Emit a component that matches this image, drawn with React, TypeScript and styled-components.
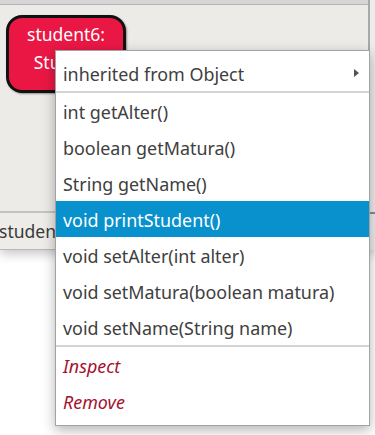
import React from 'react';
import styled, { createGlobalStyle } from 'styled-components';

const GlobalStyle = createGlobalStyle`
	body {
		margin: 0;
		background: #ffffff;
		font-family: 'Noto Sans', 'Open Sans', sans-serif;
	}
`;

const Page = styled.div`
	position: relative;
	width: 375px;
	height: 435px;
	overflow: hidden;
`;

const Frame = styled.div`
	display: flex;
	width: 375px;
	box-shadow: 0 4px 10px rgba(0, 0, 0, 0.22);
`;

const Main = styled.div`
	width: 368px;
	border-right: 2px solid #a8a8a8;
	display: flex;
	flex-direction: column;
`;

const SideStrip = styled.div`
	flex: 1;
	background: #ececec;
	display: flex;
	flex-direction: column;
	justify-content: flex-end;
	padding-bottom: 36px;
	.tick {
		height: 2px;
		background: #8a8a8a;
	}
`;

const TopBand = styled.div`
	height: 4px;
	background: #d6d6d6;
	border-bottom: 1px solid #b3b3b3;
`;

const Bench = styled.div`
	height: 208px;
	background: #ecebe7;
	padding: 10px 0 0 6px;
	box-sizing: border-box;
	border-bottom: 2px solid #c4c3c0;
`;

const ObjectNode = styled.div`
	width: 120px;
	height: 78px;
	box-sizing: border-box;
	background: #ea1744;
	border: 3px solid #111111;
	border-radius: 16px;
	box-shadow: 1px 1px 2px rgba(0, 0, 0, 0.4);
	color: #ffffff;
	font-size: 17.5px;
	line-height: 28px;
	text-align: center;
	padding-top: 2px;
`;

const StatusBar = styled.div`
	height: 36px;
	background: #edece8;
	border-bottom: 1px solid #b8b8b8;
	font-size: 17.5px;
	color: #3a3a3a;
	line-height: 36px;
	white-space: nowrap;
	overflow: hidden;
	text-indent: -1px;
`;

const Menu = styled.div`
	position: absolute;
	left: 55px;
	top: 50px;
	width: 315px;
	box-sizing: border-box;
	background: #ffffff;
	border: 1px solid #a3a3a3;
	box-shadow: 0 4px 12px rgba(0, 0, 0, 0.3);
	padding: 4px 0 6px;
`;

const Item = styled.div<{ $active?: boolean; $danger?: boolean }>`
	height: 36px;
	display: flex;
	align-items: center;
	justify-content: space-between;
	padding: 2px 10px 0 7px;
	box-sizing: border-box;
	font-size: 17.9px;
	color: ${(p) => (p.$active ? '#ffffff' : p.$danger ? '#a3122e' : '#404040')};
	background: ${(p) => (p.$active ? '#0891cc' : 'transparent')};
	font-style: ${(p) => (p.$danger ? 'italic' : 'normal')};
	white-space: nowrap;
`;

const Separator = styled.div`
	height: 2px;
	background: #d4d4d4;
`;

const Arrow = styled.span`
	width: 0;
	height: 0;
	border-top: 4px solid transparent;
	border-bottom: 4px solid transparent;
	border-left: 5px solid #555555;
	margin-top: -2px;
`;

const methods = [
	'int getAlter()',
	'boolean getMatura()',
	'String getName()',
	'void printStudent()',
	'void setAlter(int alter)',
	'void setMatura(boolean matura)',
	'void setName(String name)',
];

const App: React.FC = () => {
	return (
		<Page>
			<GlobalStyle />
			<Frame>
				<Main>
					<TopBand />
					<Bench>
						<ObjectNode>
							student6:
							<br />
							Student
						</ObjectNode>
					</Bench>
					<StatusBar>student6: Student</StatusBar>
				</Main>
				<SideStrip>
					<div className='tick' />
				</SideStrip>
			</Frame>
			<Menu>
				<Item>
					inherited from Object
					<Arrow />
				</Item>
				<Separator />
				{methods.map((m) => (
					<Item key={m} $active={m === 'void printStudent()'}>
						{m}
					</Item>
				))}
				<Separator />
				<Item $danger>Inspect</Item>
				<Item $danger>Remove</Item>
			</Menu>
		</Page>
	);
};

export default App;
